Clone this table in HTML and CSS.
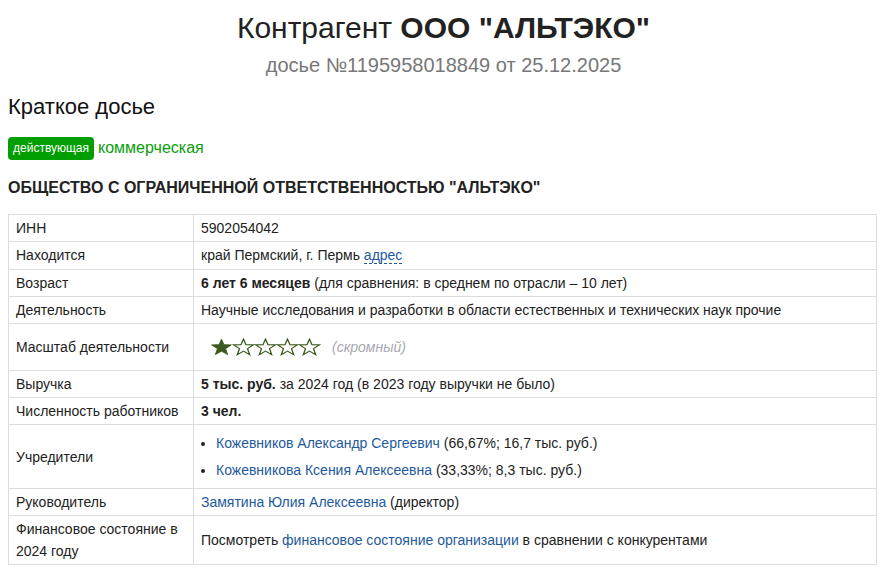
FILE: index.html
```html
<!DOCTYPE html>
<html lang="ru">
<head>
<meta charset="utf-8">
<title>Контрагент ООО "АЛЬТЭКО"</title>
<link rel="stylesheet" href="styles.css">
</head>
<body>
<header class="page-head">
  <h1 class="title">Контрагент <b>ООО "АЛЬТЭКО"</b></h1>
  <div class="subtitle">досье №1195958018849 от 25.12.2025</div>
</header>
<h2 class="section">Краткое досье</h2>
<div class="tags"><span class="badge">действующая</span> <span class="kind">коммерческая</span></div>
<h3 class="fullname">ОБЩЕСТВО С ОГРАНИЧЕННОЙ ОТВЕТСТВЕННОСТЬЮ "АЛЬТЭКО"</h3>
<table class="info">
  <tr><td class="label">ИНН</td><td>5902054042</td></tr>
  <tr class="addr-row"><td class="label">Находится</td><td>край Пермский, г. Пермь <a class="dotted" href="#">адрес</a></td></tr>
  <tr><td class="label">Возраст</td><td><b>6 лет 6 месяцев</b> (для сравнения: в среднем по отрасли – 10 лет)</td></tr>
  <tr><td class="label">Деятельность</td><td>Научные исследования и разработки в области естественных и технических наук прочие</td></tr>
  <tr class="scale-row"><td class="label">Масштаб деятельности</td><td>
    <div class="scale">
      <span class="stars">
        <svg class="star" viewBox="0 0 24 23" preserveAspectRatio="none"><polygon class="full" points="12,1.5 14.6,8.6 22.3,8.8 16.2,13.6 18.4,21.2 12,16.8 5.6,21.2 7.8,13.6 1.7,8.8 9.4,8.6"/></svg>
        <svg class="star" viewBox="0 0 24 23" preserveAspectRatio="none"><polygon class="empty" points="12,1.5 14.6,8.6 22.3,8.8 16.2,13.6 18.4,21.2 12,16.8 5.6,21.2 7.8,13.6 1.7,8.8 9.4,8.6"/></svg>
        <svg class="star" viewBox="0 0 24 23" preserveAspectRatio="none"><polygon class="empty" points="12,1.5 14.6,8.6 22.3,8.8 16.2,13.6 18.4,21.2 12,16.8 5.6,21.2 7.8,13.6 1.7,8.8 9.4,8.6"/></svg>
        <svg class="star" viewBox="0 0 24 23" preserveAspectRatio="none"><polygon class="empty" points="12,1.5 14.6,8.6 22.3,8.8 16.2,13.6 18.4,21.2 12,16.8 5.6,21.2 7.8,13.6 1.7,8.8 9.4,8.6"/></svg>
        <svg class="star" viewBox="0 0 24 23" preserveAspectRatio="none"><polygon class="empty" points="12,1.5 14.6,8.6 22.3,8.8 16.2,13.6 18.4,21.2 12,16.8 5.6,21.2 7.8,13.6 1.7,8.8 9.4,8.6"/></svg>
      </span>
      <span class="scale-note">(скромный)</span>
    </div>
  </td></tr>
  <tr><td class="label">Выручка</td><td><b>5 тыс. руб.</b> за 2024 год (в 2023 году выручки не было)</td></tr>
  <tr><td class="label">Численность работников</td><td><b>3 чел.</b></td></tr>
  <tr><td class="label">Учредители</td><td>
    <ul class="founders">
      <li><a href="#">Кожевников Александр Сергеевич</a> (66,67%; 16,7 тыс. руб.)</li>
      <li><a href="#">Кожевникова Ксения Алексеевна</a> (33,33%; 8,3 тыс. руб.)</li>
    </ul>
  </td></tr>
  <tr><td class="label">Руководитель</td><td><a href="#">Замятина Юлия Алексеевна</a> (директор)</td></tr>
  <tr><td class="label">Финансовое состояние в 2024 году</td><td>Посмотреть <a href="#">финансовое состояние организации</a> в сравнении с конкурентами</td></tr>
</table>
</body>
</html>
```
FILE: styles.css
```css
html, body {
  background: #fff;
}
body {
  margin: 8px;
  font-family: "Liberation Sans", Arial, sans-serif;
  font-size: 14px;
  line-height: 22px;
  color: #222;
}
a {
  color: #1e5a9c;
  text-decoration: none;
}
.page-head {
  text-align: center;
}
.title {
  margin: 2px 0 0;
  font-size: 30px;
  line-height: 36px;
  font-weight: normal;
  color: #222;
}
.title b {
  font-weight: bold;
}
.subtitle {
  margin-top: 7px;
  font-size: 20px;
  line-height: 24px;
  color: #777;
}
.section {
  margin: 17px 0 0;
  font-size: 22px;
  line-height: 26px;
  font-weight: normal;
  color: #111;
}
.tags {
  margin-top: 16px;
  display: flex;
  align-items: center;
  gap: 4px;
  height: 24px;
}
.badge {
  display: inline-block;
  background: #009e00;
  color: #fff;
  font-size: 12px;
  line-height: 23px;
  padding: 0 5px;
  border-radius: 4px;
}
.kind {
  color: #0a9e0a;
  font-size: 16px;
}
.fullname {
  margin: 18px 0 0;
  font-size: 16px;
  line-height: 20px;
  font-weight: bold;
  color: #222;
}
.info {
  margin-top: 16px;
  width: 869px;
  border-collapse: collapse;
}
.info td {
  border: 1px solid #ddd;
  padding: 2px 7px;
  vertical-align: middle;
}
.info td.label {
  width: 170px;
}
.addr-row td {
  padding-bottom: 3px;
}
.dotted {
  border-bottom: 1px dashed #1e5a9c;
}
.scale {
  display: flex;
  align-items: center;
  height: 42px;
  padding-left: 9px;
}
.stars {
  display: flex;
  align-items: center;
}
.star {
  width: 23px;
  height: 18px;
  margin-right: -1px;
  display: block;
}
.star .full {
  fill: #3c5a1e;
  stroke: #3c5a1e;
  stroke-width: 1;
}
.star .empty {
  fill: none;
  stroke: #3c5a1e;
  stroke-width: 1.4;
  stroke-linejoin: miter;
}
.scale-note {
  margin-left: 12px;
  font-style: italic;
  color: #a8a8b0;
}
.founders {
  margin: 5px 0;
  padding-left: 15px;
}
.founders li + li {
  margin-top: 5px;
}
```
